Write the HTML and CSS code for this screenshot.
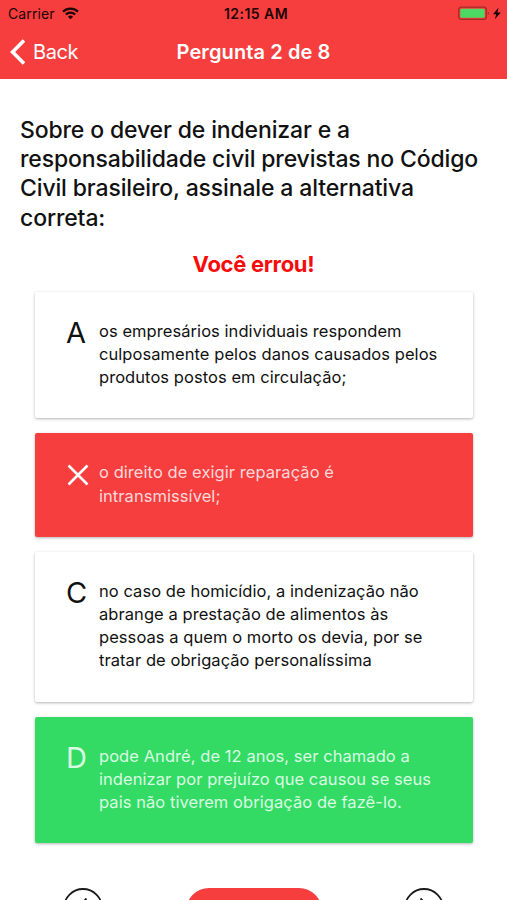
FILE: index.html
```html
<!DOCTYPE html>
<html lang="pt-BR">
<head>
  <meta charset="UTF-8">
  <meta name="viewport" content="width=device-width, initial-scale=1.0">
  <title>Pergunta 2 de 8</title>
  <link rel="stylesheet" href="styles.css">
</head>
<body>

  <header>
    <div class="status-bar">
      <div class="carrier">
        <span>Carrier</span>
        <svg class="wifi" width="17" height="13" viewBox="0 0 17 13" fill="none" stroke="#200506" stroke-width="2.2">
          <path d="M1 4.6a10.8 10.8 0 0 1 15 0"/>
          <path d="M3.8 7.5a6.8 6.8 0 0 1 9.4 0"/>
          <path d="M8.5 12.3L5.9 9.7a3.7 3.7 0 0 1 5.2 0z" fill="#200506" stroke="none"/>
        </svg>
      </div>
      <span class="time">12:15 AM</span>
      <svg class="battery" width="43" height="15" viewBox="0 0 43 15">
        <rect x="0.7" y="1.2" width="27.6" height="12.2" rx="2.6" fill="none" stroke="#a52a26" stroke-width="1.3"/>
        <rect x="2.3" y="2.8" width="24.4" height="9" rx="1" fill="#4cd964"/>
        <path d="M29.8 5.6a2 2 0 0 1 0 3.6z" fill="#a52a26"/>
        <path d="M40.6 1.6L35 8.3h3.2l-1.3 5 5.9-6.9h-3.4z" fill="#1a0405"/>
      </svg>
    </div>
    <nav class="nav-bar">
      <a class="back">
        <svg width="16" height="26" viewBox="0 0 16 26" fill="none" stroke="#fff" stroke-width="3.6">
          <path d="M14 1.6L2.6 13 14 24.4"/>
        </svg>
        <span>Back</span>
      </a>
      <h1>Pergunta 2 de 8</h1>
    </nav>
  </header>

  <main>
    <h2 class="question">
      Sobre o dever de indenizar e a<br>
      responsabilidade civil previstas no Código<br>
      Civil brasileiro, assinale a alternativa<br>
      correta:
    </h2>
    <p class="result">Você errou!</p>

    <div class="answers">
      <div class="answer">
        <span class="letter">A</span>
        <p>os empresários individuais respondem<br>culposamente pelos danos causados pelos<br>produtos postos em circulação;</p>
      </div>
      <div class="answer wrong">
        <span class="letter">
          <svg width="22" height="22" viewBox="0 0 22 22" stroke="#fff" stroke-width="2.5">
            <path d="M1.5 1.5l19 19M20.5 1.5l-19 19"/>
          </svg>
        </span>
        <p>o direito de exigir reparação é<br>intransmissível;</p>
      </div>
      <div class="answer">
        <span class="letter">C</span>
        <p>no caso de homicídio, a indenização não<br>abrange a prestação de alimentos às<br>pessoas a quem o morto os devia, por se<br>tratar de obrigação personalíssima</p>
      </div>
      <div class="answer right">
        <span class="letter">D</span>
        <p>pode André, de 12 anos, ser chamado a<br>indenizar por prejuízo que causou se seus<br>pais não tiverem obrigação de fazê-lo.</p>
      </div>
    </div>

    <div class="controls">
      <svg width="40" height="40" viewBox="0 0 40 40" fill="none" stroke="#1a1a1a" stroke-width="1.8">
        <circle cx="20" cy="20" r="19"/>
        <path d="M23.5 10.5L14 20l9.5 9.5"/>
      </svg>
      <div class="main-button"></div>
      <svg width="40" height="40" viewBox="0 0 40 40" fill="none" stroke="#1a1a1a" stroke-width="1.8">
        <circle cx="20" cy="20" r="19"/>
        <path d="M16.5 10.5L26 20l-9.5 9.5"/>
      </svg>
    </div>
  </main>

</body>
</html>
```

FILE: styles.css
```css
body {
  font-family: Inter, "Liberation Sans", sans-serif;
  margin: 0;
  padding: 0;
  height: 900px;
  overflow: hidden;
  background-color: #fff;
  color: #111;
}
header {
  height: 79px;
  background-color: #f63e3f;
}
.status-bar {
  display: grid;
  grid-template-columns: 1fr auto 1fr;
  align-items: center;
  height: 27px;
  padding: 0 6px 0 8px;
  font-size: 14px;
  color: #200506;
}
.carrier {
  display: flex;
  align-items: center;
  gap: 7px;
  letter-spacing: 0.1px;
}
.time {
  padding-left: 3px;
  font-weight: 600;
  font-size: 14px;
  letter-spacing: 0.45px;
}
.battery {
  justify-self: end;
}
.nav-bar {
  display: grid;
  grid-template-columns: 1fr auto 1fr;
  align-items: center;
  height: 50px;
  padding: 0 10px;
  color: #fff;
}
.back {
  display: flex;
  align-items: center;
  gap: 7px;
  font-size: 20px;
  letter-spacing: -0.4px;
}
.nav-bar h1 {
  margin: 0;
  font-size: 20px;
  font-weight: 600;
  letter-spacing: 0.1px;
}
main {
  padding: 37px 20px 0;
}
.question {
  margin: 0;
  font-size: 23px;
  font-weight: 500;
  letter-spacing: -0.14px;
  line-height: 29.2px;
  white-space: nowrap;
}
.result {
  margin: 17px 0 0;
  text-align: center;
  font-size: 22px;
  font-weight: 700;
  letter-spacing: -0.3px;
  line-height: 29px;
  color: #f80b0b;
}
.answers {
  display: flex;
  flex-direction: column;
  gap: 15px;
  margin: 13px 14px 0 15px;
}
.answer {
  display: flex;
  padding: 28px 32px 29px;
  border-radius: 2px;
  box-shadow: 0 1px 3px rgba(0, 0, 0, 0.3);
}
.answer p {
  margin: 0;
  font-size: 16.5px;
  letter-spacing: 0.06px;
  line-height: 23.2px;
  white-space: nowrap;
}
.letter {
  width: 33px;
  margin-left: -1px;
  flex-shrink: 0;
  font-size: 29px;
  line-height: 26px;
}
.letter svg {
  display: block;
  margin: 3px 0 0 1px;
}
.wrong {
  background-color: #f63e3f;
  color: #ffd9d9;
}
.right {
  background-color: #33db64;
  color: #d9fbe2;
}
.controls {
  display: flex;
  justify-content: space-between;
  margin: 45px 43px 0;
}
.main-button {
  width: 136px;
  height: 46px;
  border-radius: 23px;
  background-color: #f63e3f;
}
```
